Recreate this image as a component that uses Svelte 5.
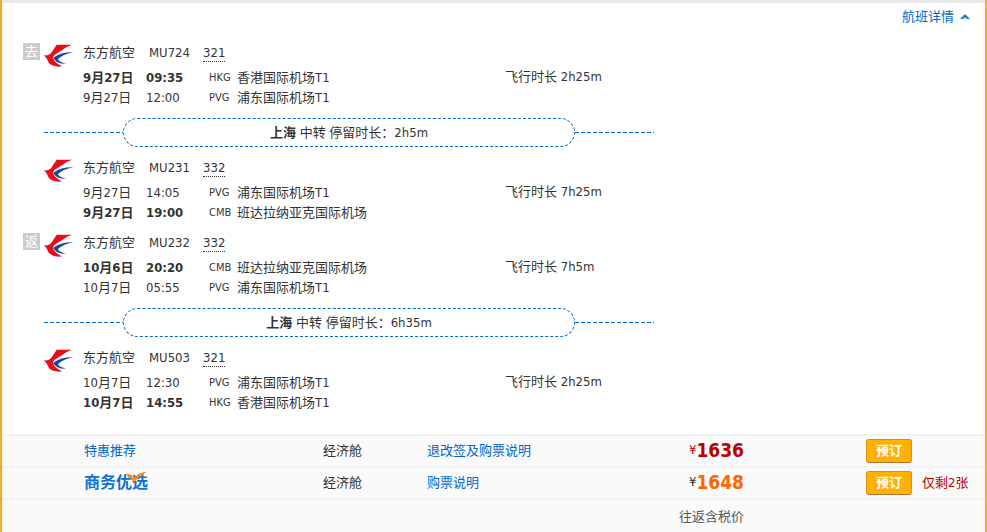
<script lang="ts">
	type Stop = { date: string; time: string; code: string; airport: string; main?: boolean };
	type Flight = {
		direction?: string;
		number: string;
		plane: string;
		duration: string;
		stops: Stop[];
		transfer?: string;
	};

	const airports: Record<string, string> = {
		HKG: '香港国际机场T1',
		PVG: '浦东国际机场T1',
		CMB: '班达拉纳亚克国际机场'
	};

	function stop(date: string, time: string, code: string, main = false): Stop {
		return { date, time, code, airport: airports[code], main };
	}

	const flights: Flight[] = [
		{
			direction: '去',
			number: 'MU724',
			plane: '321',
			duration: '2h25m',
			stops: [stop('9月27日', '09:35', 'HKG', true), stop('9月27日', '12:00', 'PVG')],
			transfer: '2h5m'
		},
		{
			number: 'MU231',
			plane: '332',
			duration: '7h25m',
			stops: [stop('9月27日', '14:05', 'PVG'), stop('9月27日', '19:00', 'CMB', true)]
		},
		{
			direction: '返',
			number: 'MU232',
			plane: '332',
			duration: '7h5m',
			stops: [stop('10月6日', '20:20', 'CMB', true), stop('10月7日', '05:55', 'PVG')],
			transfer: '6h35m'
		},
		{
			number: 'MU503',
			plane: '321',
			duration: '2h25m',
			stops: [stop('10月7日', '12:30', 'PVG'), stop('10月7日', '14:55', 'HKG', true)]
		}
	];

	const fares = [
		{ name: '特惠推荐', business: false, rules: '退改签及购票说明', price: 1636, left: 0 },
		{ name: '商务优选', business: true, rules: '购票说明', price: 1648, left: 2 }
	];

	let open = $state(true);
</script>

<div class="result">
	<div class="toolbar">
		<button class="toggle" aria-expanded={open} onclick={() => (open = !open)}>
			航班详情
			<svg class:closed={!open} width="10" height="6" viewBox="0 0 10 6" aria-hidden="true">
				<path d="M5 0L10 5H7L5 3.6L3 5H0Z" fill="#2277cc" />
			</svg>
		</button>
	</div>

	{#if open}
		<div class="flights">
			{#each flights as flight}
				<section class="flight">
					<div class="badge">
						{#if flight.direction}<span class="direction">{flight.direction}</span>{/if}
					</div>
					<svg class="airline" width="30" height="24" viewBox="132 42 90 72" aria-hidden="true">
						<path
							d="M170 44H216Q198 50 188 59L163 75Q150 90 186 109Q163 113 147 100Q143 88 132 75Q144 79 153 70Z"
							fill="#e60f19"
						/>
						<path
							d="M220 67Q184 66 160 83Q165 101 198 101Q174 95 174 87Q187 74 220 67Z"
							fill="#15489b"
						/>
					</svg>
					<div class="legs">
						<div class="summary">
							<span>东方航空</span>
							<span>{flight.number}</span>
							<span><abbr>{flight.plane}</abbr></span>
						</div>
						{#each flight.stops as s}
							<div class="stop">
								<span class:main={s.main}>{s.date}</span>
								<span class:main={s.main}>{s.time}</span>
								<span class="code">{s.code}</span>
								<span>{s.airport}</span>
							</div>
						{/each}
					</div>
					<div class="duration">飞行时长 {flight.duration}</div>
				</section>
				{#if flight.transfer}
					<div class="transfer">
						<p><strong>上海</strong> 中转 停留时长：{flight.transfer}</p>
					</div>
				{/if}
			{/each}
		</div>
	{/if}

	<table class="fares">
		<colgroup>
			<col class="col-name" />
			<col class="col-cabin" />
			<col />
			<col class="col-price" />
			<col class="col-book" />
		</colgroup>
		<tbody>
			{#each fares as fare}
				<tr>
					<td class="name">
						{#if fare.business}
							<span class="business">
								{fare.name}
								<svg width="22" height="10" viewBox="0 0 22 10" aria-hidden="true">
									<path
										d="M1 2L6 3L9 6Q13 1 21 0Q14 4 9 10Q5 5 1 2Z"
										fill="#ff8a14"
										stroke="#ff8a14"
										stroke-width="0.6"
									/>
								</svg>
							</span>
						{:else}
							<a href="#fare">{fare.name}</a>
						{/if}
					</td>
					<td>经济舱</td>
					<td><a href="#rules">{fare.rules}</a></td>
					<td class="price" class:orange={fare.business}>
						<div><span>¥</span><strong>{fare.price}</strong></div>
					</td>
					<td class="book">
						<div>
							<button>预订</button>
							{#if fare.left}<span class="left">仅剩{fare.left}张</span>{/if}
						</div>
					</td>
				</tr>
			{/each}
		</tbody>
		<tfoot>
			<tr>
				<td colspan="3"></td>
				<td class="note">往返含税价</td>
				<td></td>
			</tr>
		</tfoot>
	</table>
</div>

<style>
	:global(body) {
		margin: 0;
		background: #fff;
	}

	.result {
		border: solid #faa635;
		border-width: 0 2px;
		color: #333;
		font-family: 'DejaVu Sans Condensed', 'Noto Sans CJK SC', sans-serif;
		font-size: 13px;
		line-height: 20px;
	}

	a {
		color: #06c;
		text-decoration: none;
	}

	button {
		font: inherit;
		cursor: pointer;
	}

	.toolbar {
		display: flex;
		justify-content: flex-end;
		height: 35px;
		border-top: 3px solid #ebebeb;
		padding-right: 15px;
	}

	.toggle {
		display: flex;
		align-items: center;
		gap: 6px;
		height: 28px;
		border: 0;
		padding: 0;
		background: none;
		color: #06c;
	}

	.closed {
		transform: rotate(180deg);
	}

	.flights {
		padding: 0 21px 16px;
	}

	.flight {
		display: flex;
		height: 75px;
	}

	.badge {
		width: 21px;
		padding-top: 5px;
	}

	.direction {
		display: block;
		width: 17px;
		background: #ccc;
		color: #fff;
		line-height: 17px;
		text-align: center;
	}

	.airline {
		margin: 6px 9px 0 0;
	}

	.legs {
		width: 422px;
	}

	.summary {
		display: grid;
		grid-template-columns: 66px 54px 1fr;
		line-height: 30px;
	}

	abbr {
		display: inline-block;
		border-bottom: 1px dotted #333;
		line-height: 17px;
	}

	.stop {
		display: grid;
		grid-template-columns: 63px 63px 28px 1fr;
	}

	.main {
		font-weight: bold;
	}

	.code {
		font-size: 11px;
	}

	.duration {
		padding-top: 29px;
	}

	.transfer {
		display: flex;
		align-items: center;
		max-width: 610px;
		height: 39px;
		margin: 0 0 1px 21px;
	}

	.transfer::before,
	.transfer::after {
		content: '';
		flex: 1;
		height: 1px;
		background: repeating-linear-gradient(to right, #06c 0 4px, transparent 4px 6px);
	}

	.transfer p {
		box-sizing: border-box;
		width: 452px;
		margin: 0;
		border: 1px dashed #06c;
		border-radius: 15px;
		line-height: 27px;
		text-align: center;
	}

	.fares {
		width: 100%;
		border-collapse: collapse;
		table-layout: fixed;
		background: #fafafa;
	}

	.fares tr {
		height: 32px;
		border-top: 2px solid #f2f2f2;
	}

	.fares tfoot tr {
		height: 34px;
	}

	.fares td {
		padding: 0;
	}

	.col-name {
		width: 321px;
	}

	.col-cabin {
		width: 104px;
	}

	.col-price {
		width: 120px;
	}

	.col-book {
		width: 241px;
	}

	.fares .name {
		padding-left: 82px;
	}

	.business {
		position: relative;
		color: #0f70d6;
		font-size: 16px;
		font-weight: bold;
	}

	.business svg {
		position: absolute;
		top: -1px;
		left: 41px;
	}

	.price div {
		display: flex;
		align-items: center;
		justify-content: flex-end;
		padding-bottom: 2px;
	}

	.price {
		color: #b00;
	}

	.price strong {
		font-size: 19px;
	}

	.orange span {
		color: #333;
	}

	.orange strong {
		color: #f60;
	}

	.note {
		color: #555;
		text-align: right;
	}

	.fares .book {
		padding-left: 122px;
	}

	.book div {
		display: flex;
		align-items: center;
		gap: 10px;
	}

	.book button {
		box-sizing: border-box;
		width: 46px;
		height: 24px;
		border: 1px solid #e98a00;
		border-bottom-color: #ad7332;
		border-radius: 3px;
		padding: 0;
		background: #ffb000;
		color: #fff;
		font-weight: bold;
		line-height: 20px;
	}

	.left {
		color: #b00;
	}
</style>
